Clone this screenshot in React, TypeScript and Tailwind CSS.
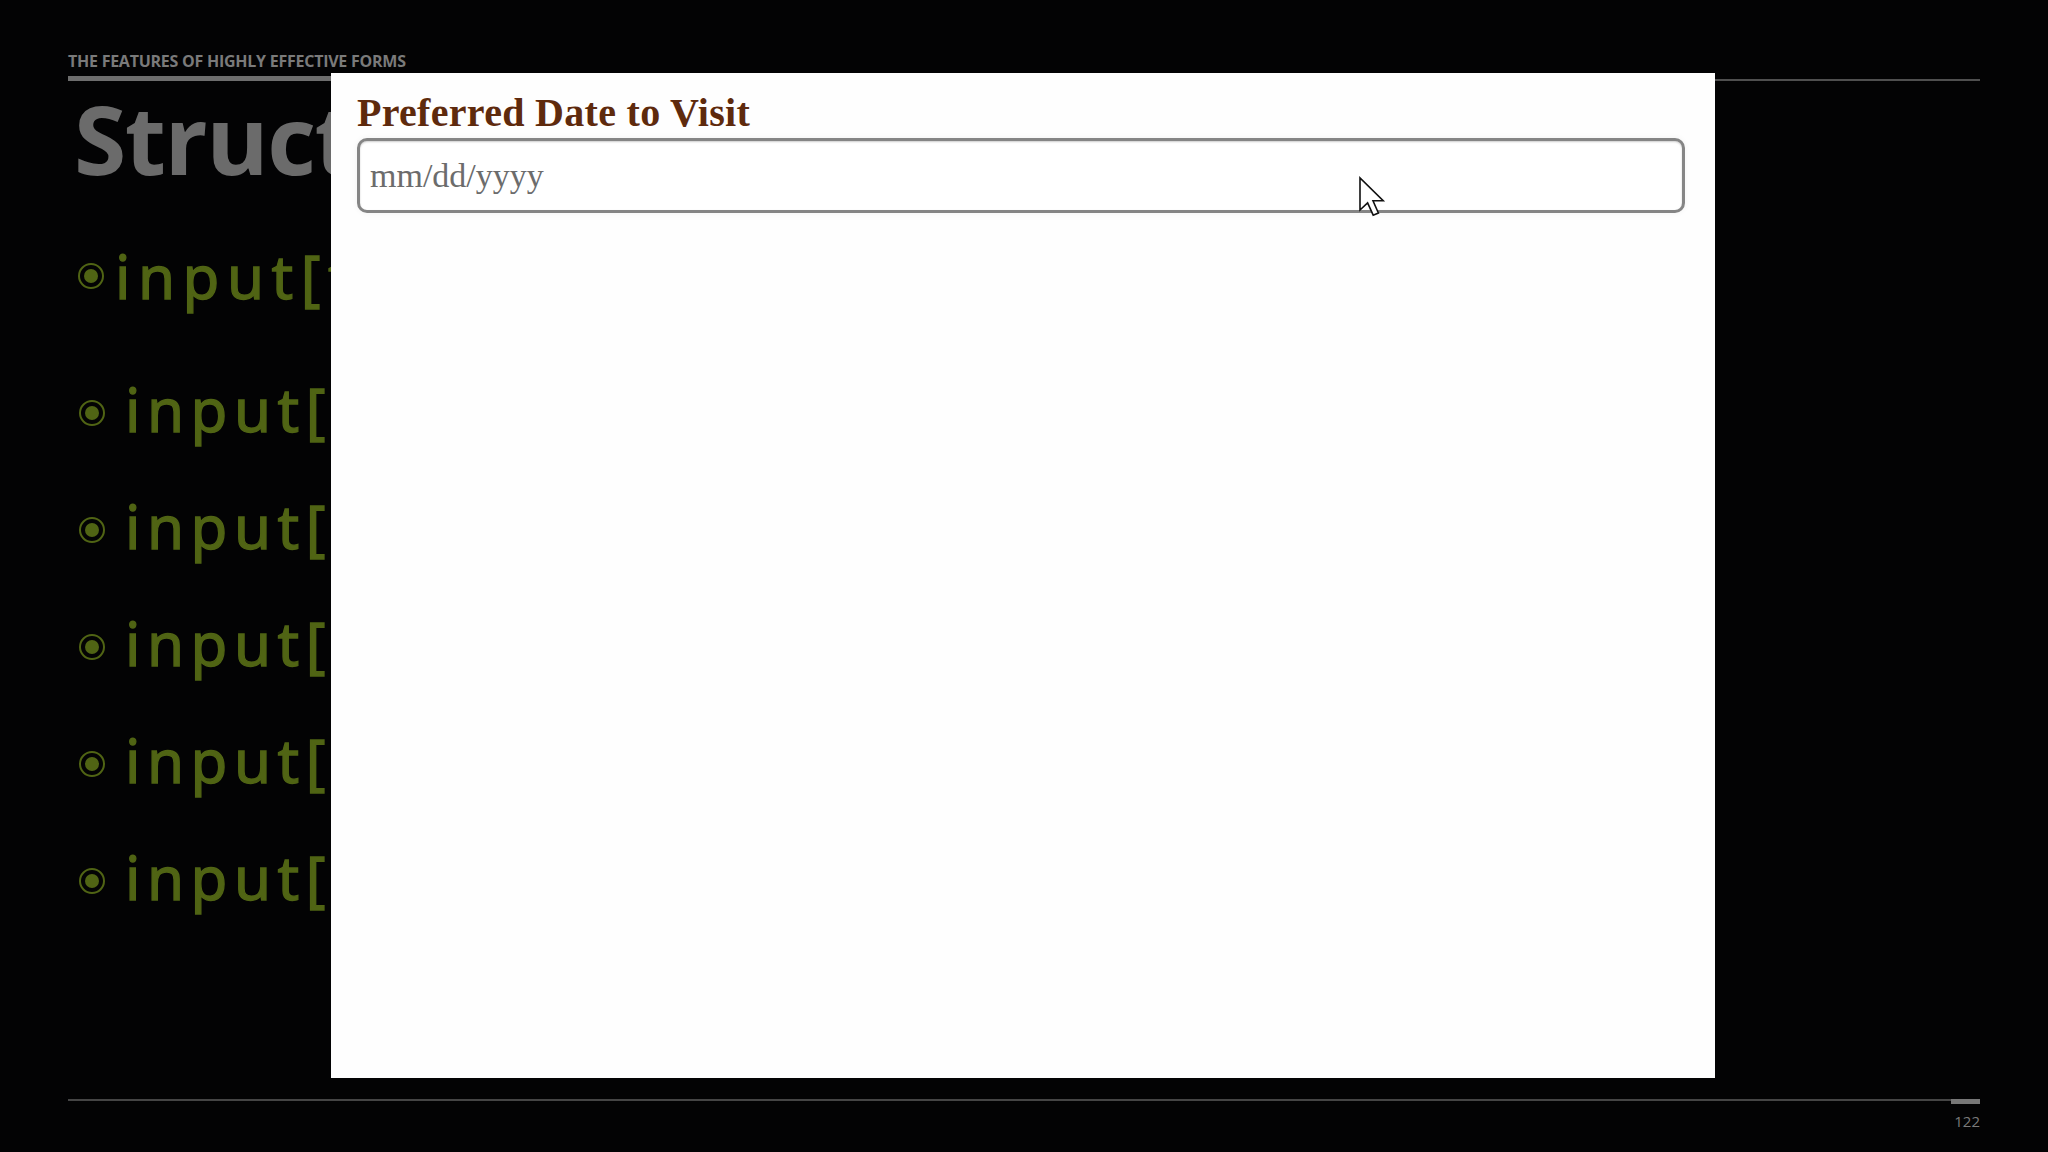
import React from 'react';

const rows = [
  { text: 'input[type=email]', first: true },
  { text: 'input[type=url]', first: false },
  { text: 'input[type=tel]', first: false },
  { text: 'input[type=number]', first: false },
  { text: 'input[type=date]', first: false },
  { text: 'input[type=range]', first: false },
];

function Bullet({ shift }: { shift: boolean }) {
  return (
    <div
      className={`flex h-[26px] w-[26px] shrink-0 items-center justify-center rounded-full border-2 border-[#506414] ${
        shift ? 'mt-[8px]' : ''
      }`}
    >
      <div className="h-[14px] w-[14px] rounded-full bg-[#506414]" />
    </div>
  );
}

function Cursor() {
  return (
    <svg width="28" height="42" viewBox="0 0 14 21" className="absolute left-[1358px] top-[176px]">
      <path
        d="M1 1 L1 17 L4.8 13.4 L7.6 19.6 L10.2 18.5 L7.5 12.4 L12.6 12.4 Z"
        fill="#ffffff"
        stroke="#111111"
        strokeWidth="0.8"
        strokeLinejoin="miter"
      />
    </svg>
  );
}

export default function App() {
  return (
    <div className="relative h-[1152px] w-[2048px] overflow-hidden bg-[#030304]">
      {/* slide underneath */}
      <div className="flex h-full flex-col px-[68px] pt-[53px]">
        <div className="font-['Open_Sans',sans-serif] text-[16px] font-bold uppercase leading-none tracking-[-0.25px] text-[#7a7a7a]">
          The Features of Highly Effective Forms
        </div>
        <div className="mt-[7px] flex items-end">
          <div className="h-[5px] w-[339px] bg-[#6d6d6d]" />
          <div className="h-[2px] flex-1 bg-[#4f4f4f]" />
        </div>
        <h1 className="ml-[6px] mt-[10px] font-['Open_Sans',sans-serif] text-[95px] font-bold leading-none tracking-[-1.5px] text-[#6b6b6b]">
          Structure
        </h1>

        <ul className="mt-[60px] flex flex-col">
          {rows.map((row, i) => (
            <li
              key={row.text}
              className={`flex items-center ${
                row.first ? 'pl-[10px] gap-[11px]' : 'pl-[11px] gap-[20px]'
              } ${i === 1 ? 'mt-[73px]' : i > 1 ? 'mt-[57px]' : ''}`}
            >
              <Bullet shift={!row.first} />
              <span
                className={`whitespace-nowrap font-['Noto_Sans',sans-serif] text-[60px] leading-none text-[#506414] [-webkit-text-stroke:1.3px_#506414] ${
                  row.first ? 'tracking-[7.5px]' : 'tracking-[6.5px]'
                }`}
              >
                {row.text}
              </span>
            </li>
          ))}
        </ul>

        <div className="mt-auto flex items-start">
          <div className="h-[2px] flex-1 bg-[#454545]" />
          <div className="h-[5px] w-[29px] bg-[#777777]" />
        </div>
        <div className="mb-[23px] mt-[10px] text-right font-['Open_Sans',sans-serif] text-[15px] leading-none text-[#7a7a7a]">
          122
        </div>
      </div>

      {/* demo window over the slide */}
      <div className="absolute left-[331px] top-[73px] h-[1005px] w-[1384px] bg-[#fefefe] pl-[26px] pt-[20px]">
        <label className="block font-['Liberation_Serif',serif] text-[40px] font-bold leading-none tracking-[0.3px] text-[#5e2a0d]">
          Preferred Date to Visit
        </label>
        <input
          type="text"
          readOnly
          placeholder="mm/dd/yyyy"
          className="mt-[5px] block h-[75px] w-[1328px] rounded-[10px] border-[3px] border-[#858585] bg-white pl-[10px] font-['Liberation_Serif',serif] text-[34px] text-[#6a6a6a] shadow-[inset_0_1px_2px_rgba(0,0,0,0.2),0_0_6px_rgba(0,0,0,0.05)] outline-none placeholder:text-[#6c6c6c]"
        />
      </div>

      <Cursor />
    </div>
  );
}
